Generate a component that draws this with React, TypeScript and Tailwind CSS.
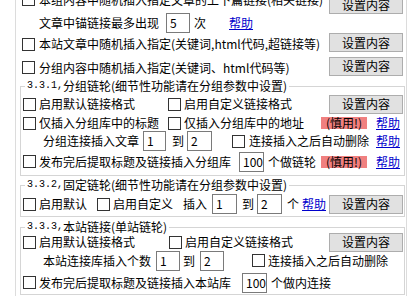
import React from 'react';

const Box = () => <span className="w-[13px] h-[13px] border border-[#333] bg-white shrink-0" />;

const Field = ({ v, w = 'w-[24px]' }: { v: string; w?: string }) => (
  <span className={`${w} h-[20px] border border-[#7a7a7a] bg-white pl-[3px] flex items-center shrink-0`}>{v}</span>
);

const Btn = ({ extra = '' }: { extra?: string }) => (
  <button className={`ml-auto w-[74px] h-[19px] border border-[#adadad] bg-[#e1e1e1] flex items-center justify-center shrink-0 ${extra}`}>
    设置内容
  </button>
);

const Help = ({ extra = '' }: { extra?: string }) => (
  <a className={`text-[#0000cc] underline shrink-0 ${extra}`}>帮助</a>
);

const Warn = () => (
  <span className="w-[46px] h-[12px] leading-[12px] bg-[#f08080] text-center shrink-0">(慎用!)</span>
);

const Legend = ({ num, text }: { num: string; text: string }) => (
  <legend className="ml-[4px] px-[2px] h-[14px] leading-[14px] overflow-visible whitespace-nowrap">
    <span className="font-['Liberation_Mono'] text-[10px] leading-[14px] align-top">{num}</span>
    <span className="leading-[14px] align-top">{text}</span>
  </legend>
);

export default function App() {
  return (
    <div className="w-[419px] h-[296px] overflow-hidden bg-white text-black text-[12px] leading-[14px] font-['Noto_Sans_CJK_SC',sans-serif]">
      <div className="ml-[15px] w-[392px] -mt-[15px] border-x border-[#dcdcdc] min-h-[320px]">
        {/* top options */}
        <div className="flex items-center h-[29px] pl-[6px] pr-[3px]">
          <Box />
          <span className="ml-[4px] whitespace-nowrap">本组内容中随机插入指定文章的上下篇链接(相关链接)</span>
          <Btn extra="self-end" />
        </div>
        <div className="flex items-center h-[18px] pl-[23px]">
          <span className="w-[127px] whitespace-nowrap">文章中锚链接最多出现</span>
          <Field v="5" />
          <span className="w-[39px] pl-[4px]">次</span>
          <Help />
        </div>
        <div className="flex items-center h-[24px] pl-[6px] pr-[3px]">
          <Box />
          <span className="ml-[4px] whitespace-nowrap">本站文章中随机插入指定(关键词,html代码,超链接等)</span>
          <Btn extra="-mt-[3px]" />
        </div>
        <div className="flex items-center h-[23px] pl-[6px] pr-[3px]">
          <Box />
          <span className="ml-[4px] whitespace-nowrap">分组内容中随机插入指定(关键词、html代码等)</span>
          <Btn extra="-mt-[3px]" />
        </div>

        {/* 3.3.1 */}
        <fieldset className="ml-[4px] mr-[1px] border border-[#d5d5d5] pb-[3px]">
          <Legend num="3.3.1," text="分组链轮(细节性功能请在分组参数中设置)" />
          <div className="flex items-center h-[22px] pl-[2px] pr-[1px]">
            <span className="w-[145px] flex items-center"><Box /><span className="ml-[3px]">启用默认链接格式</span></span>
            <Box />
            <span className="ml-[3px]">启用自定义链接格式</span>
            <Btn />
          </div>
          <div className="flex items-center h-[16px] pl-[2px]">
            <span className="w-[145px] flex items-center"><Box /><span className="ml-[3px]">仅插入分组库中的标题</span></span>
            <span className="w-[153px] flex items-center"><Box /><span className="ml-[3px] whitespace-nowrap">仅插入分组库中的地址</span></span>
            <Warn />
            <Help extra="ml-[9px]" />
          </div>
          <div className="flex items-center h-[20px] pl-[22px]">
            <span className="w-[100px] whitespace-nowrap">分组连接插入文章</span>
            <Field v="1" w="w-[23px]" />
            <span className="w-[21px] pl-[6px]">到</span>
            <Field v="2" w="w-[25px]" />
            <span className="w-[20px]" />
            <Box />
            <span className="ml-[4px] w-[127px] whitespace-nowrap">连接插入之后自动删除</span>
            <Help />
          </div>
          <div className="flex items-center h-[21px] pl-[2px]">
            <Box />
            <span className="ml-[3px] w-[200px] whitespace-nowrap">发布完后提取标题及链接插入分组库</span>
            <Field v="100" w="w-[25px]" />
            <span className="ml-[4px] w-[53px] whitespace-nowrap">个做链轮</span>
            <Warn />
            <Help extra="ml-[9px]" />
          </div>
        </fieldset>

        {/* 3.3.2 */}
        <fieldset className="mt-[2px] ml-[4px] mr-[1px] border border-[#d5d5d5]">
          <Legend num="3.3.2," text="固定链轮(细节性功能请在分组参数中设置)" />
          <div className="flex items-center h-[24px] pl-[2px] pr-[1px]">
            <span className="w-[74px] flex items-center"><Box /><span className="ml-[3px]">启用默认</span></span>
            <span className="w-[86px] flex items-center"><Box /><span className="ml-[3px]">启用自定义</span></span>
            <span className="w-[29px]">插入</span>
            <Field v="1" w="w-[25px]" />
            <span className="w-[20px] pl-[5px]">到</span>
            <Field v="2" w="w-[25px]" />
            <span className="w-[20px] pl-[5px]">个</span>
            <Help />
            <Btn />
          </div>
        </fieldset>

        {/* 3.3.3 */}
        <fieldset className="mt-[3px] ml-[4px] mr-[1px] border border-[#d5d5d5]">
          <Legend num="3.3.3," text="本站链接(单站链轮)" />
          <div className="flex items-center h-[16px] pl-[2px] pr-[1px]">
            <span className="w-[146px] flex items-center"><Box /><span className="ml-[3px]">启用默认链接格式</span></span>
            <Box />
            <span className="ml-[3px]">启用自定义链接格式</span>
            <Btn />
          </div>
          <div className="flex items-center h-[21px] pl-[22px]">
            <span className="w-[113px] whitespace-nowrap">本站连接库插入个数</span>
            <Field v="1" />
            <span className="w-[20px] pl-[3px]">到</span>
            <Field v="2" />
            <span className="w-[28px]" />
            <Box />
            <span className="ml-[3px] whitespace-nowrap">连接插入之后自动删除</span>
          </div>
          <div className="flex items-center h-[23px] pl-[2px]">
            <Box />
            <span className="ml-[3px] w-[203px] whitespace-nowrap">发布完后提取标题及链接插入本站库</span>
            <Field v="100" w="w-[25px]" />
            <span className="ml-[4px] whitespace-nowrap">个做内连接</span>
          </div>
        </fieldset>
      </div>
    </div>
  );
}
